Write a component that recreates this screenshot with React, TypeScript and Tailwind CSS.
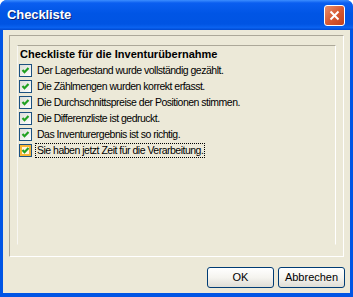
import React from "react";

const items = [
  "Der Lagerbestand wurde vollständig gezählt.",
  "Die Zählmengen wurden korrekt erfasst.",
  "Die Durchschnittspreise der Positionen stimmen.",
  "Die Differenzliste ist gedruckt.",
  "Das Inventurergebnis ist so richtig.",
  "Sie haben jetzt Zeit für die Verarbeitung.",
];

const CheckBox: React.FC<{ hot?: boolean }> = ({ hot }) => (
  <div className="w-[13px] h-[13px] border border-[#1C5180] bg-gradient-to-br from-[#DCDCD7] to-white flex items-center justify-center shrink-0">
    <div
      className={
        hot
          ? "w-[11px] h-[11px] border-2 border-[#F8B636] bg-[#FDF5DF] flex items-center justify-center"
          : "w-[11px] h-[11px] flex items-center justify-center"
      }
    >
      <svg width="9" height="9" viewBox="0 0 9 9" className="shrink-0">
        <path d="M1.5 4 L3.5 6.2 L7.5 2" fill="none" stroke="#21A121" strokeWidth="2.2" />
      </svg>
    </div>
  </div>
);

const XpButton: React.FC<{ label: string }> = ({ label }) => (
  <button className="w-[67px] h-[21px] rounded-[3px] border border-[#003C74] bg-gradient-to-b from-white via-[#F5F4EF] to-[#DEDDD5] text-[11px] text-black leading-none">
    {label}
  </button>
);

export default function App() {
  return (
    <div className="w-[353px] h-[297px] bg-white font-['Liberation_Sans',sans-serif]">
      <div className="h-full flex flex-col rounded-t-[7px] overflow-hidden bg-[#0055E5]">
        {/* Title bar */}
        <div className="h-[30px] shrink-0 flex items-center justify-between pl-[7px] pr-[6px] bg-[linear-gradient(to_bottom,#3C8DFF_0%,#0A5EF0_10%,#0055E5_45%,#0054E3_80%,#0A62F0_92%,#0049D0_100%)]">
          <span className="text-white font-bold text-[13px] tracking-[-0.1px] [text-shadow:1px_1px_0_#0A1E6E]">
            Checkliste
          </span>
          <div className="w-[21px] h-[21px] mr-[2px] rounded-[3px] border border-white bg-gradient-to-br from-[#E78F6D] via-[#D85A32] to-[#C2401C] flex items-center justify-center">
            <svg width="11" height="11" viewBox="0 0 11 11">
              <path d="M1.5 1.5 L9.5 9.5 M9.5 1.5 L1.5 9.5" stroke="white" strokeWidth="2" />
            </svg>
          </div>
        </div>

        {/* Client area */}
        <div className="flex-1 mx-[3px] mb-[4px] bg-[#ECE9D8] flex flex-col text-[11px] text-black">
          <div className="mt-[5px] ml-[6px] mr-[6px] h-[222px] border border-t-[#ACA899] border-l-[#ACA899] border-r-white border-b-white">
            <div className="mt-[9px] ml-[7px] mr-[7px] h-[200px] border border-t-[#ACA899] border-l-[#F8F7F2] border-r-white border-b-[#ECE9D8]">
              <div className="h-[16px] pl-[2px] flex items-center font-bold text-[11px]">
                Checkliste für die Inventurübernahme
              </div>
              <div className="flex flex-col">
                {items.map((t, i) => (
                  <div key={t} className="h-[16px] pl-[1px] flex items-center gap-[3px]">
                    <CheckBox hot={i === items.length - 1} />
                    <span
                      className={
                        i === items.length - 1
                          ? "px-[1px] border border-dotted border-black leading-[13px] text-[10.5px] tracking-[-0.5px]"
                          : "px-[1px] border border-transparent leading-[13px] text-[10.5px] tracking-[-0.5px]"
                      }
                    >
                      {t}
                    </span>
                  </div>
                ))}
              </div>
            </div>
          </div>
          <div className="mt-[10px] mr-[5px] flex justify-end gap-[4px]">
            <XpButton label="OK" />
            <XpButton label="Abbrechen" />
          </div>
        </div>
      </div>
    </div>
  );
}
